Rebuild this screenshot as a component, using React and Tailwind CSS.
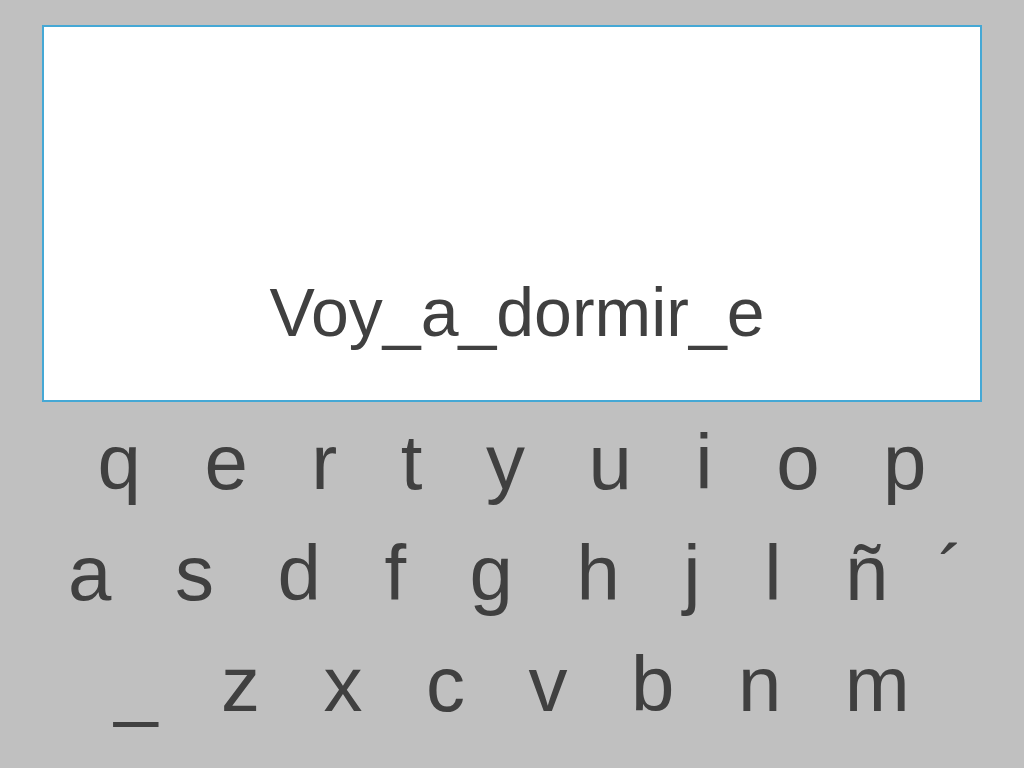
export default function App() {
  const rows = [
    ["q", "e", "r", "t", "y", "u", "i", "o", "p"],
    ["a", "s", "d", "f", "g", "h", "j", "l", "ñ", "´"],
    ["_", "z", "x", "c", "v", "b", "n", "m"],
  ];
  return (
    <div
      className="w-[1024px] h-[768px] bg-[#c0c0c0] overflow-hidden text-[#404040]"
      style={{ fontFamily: '"Liberation Sans", Arial, sans-serif' }}
    >
      <div className="pt-[25px] px-[42px]">
        <div className="w-[940px] h-[377px] bg-white border-2 border-[#45a8d5] pt-[245px] pl-[10px]">
          <div className="text-center text-[68px] leading-[80px]">Voy_a_dormir_e</div>
        </div>
      </div>
      <div className="mt-[5px] flex flex-col">
        {rows.map((row, i) => (
          <div
            key={i}
            className={
              i === 1
                ? "flex justify-center gap-[63.5px] text-[78px] leading-[111px] pl-[8px]"
                : "flex justify-center gap-[63.5px] text-[78px] leading-[111px]"
            }
          >
            {row.map((k, j) => (
              <span key={j} className={k === "´" ? "-ml-[14px]" : ""}>
                {k}
              </span>
            ))}
          </div>
        ))}
      </div>
    </div>
  );
}
